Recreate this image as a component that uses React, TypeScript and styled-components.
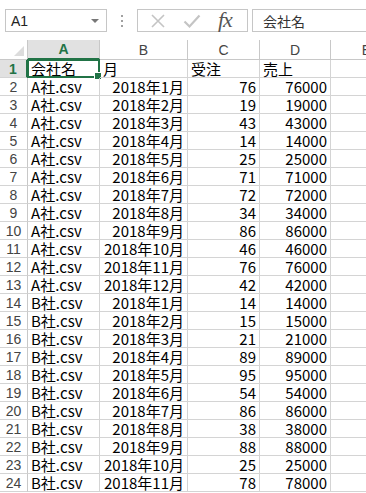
import React from 'react';
import styled, { createGlobalStyle } from 'styled-components';

const GlobalStyle = createGlobalStyle`
  html, body {
    margin: 0;
    padding: 0;
    background: #ffffff;
    overflow: hidden;
  }
  * { box-sizing: border-box; }
`;

const GREEN = '#217346';
const GRID = '#d4d4d4';
const HEAD_LINE = '#c8c8c8';

const Page = styled.div`
  width: 366px;
  height: 493px;
  overflow: hidden;
  background: #fff;
  font-family: "Noto Sans CJK JP", "Noto Sans", sans-serif;
`;

const Toolbar = styled.div`
  height: 40px;
  display: flex;
  align-items: flex-start;
  padding-top: 9px;
  padding-left: 5px;
`;

const NameBox = styled.div`
  width: 102px;
  height: 23px;
  border: 1px solid #c6c6c6;
  display: flex;
  align-items: center;
  justify-content: space-between;
  padding: 0 7px 0 5px;
  font-family: "Liberation Sans", sans-serif;
  font-size: 14px;
  color: #222;
`;

const Caret = styled.span`
  width: 0;
  height: 0;
  border-left: 4px solid transparent;
  border-right: 4px solid transparent;
  border-top: 4px solid #777;
`;

const Grip = styled.div`
  width: 30px;
  height: 23px;
  display: flex;
  flex-direction: column;
  align-items: center;
  justify-content: center;
  gap: 3px;
  span {
    width: 2px;
    height: 2px;
    background: #a0a0a0;
  }
`;

const FxBox = styled.div`
  width: 111px;
  height: 23px;
  border: 1px solid #c6c6c6;
  display: flex;
  align-items: center;
  padding-left: 12px;
  gap: 17px;
`;

const FxLabel = styled.span`
  font-family: "Liberation Serif", serif;
  font-style: italic;
  font-size: 22px;
  color: #555;
  line-height: 1;
  margin-top: -2px;
  letter-spacing: -1px;
`;

const FormulaInput = styled.div`
  flex: 1;
  height: 23px;
  margin-left: 4px;
  border: 1px solid #c6c6c6;
  border-right: none;
  display: flex;
  align-items: center;
  padding-left: 10px;
  font-family: "Noto Sans CJK JP", sans-serif;
  font-size: 14px;
  color: #333;
`;

const Sheet = styled.div`
  display: grid;
  grid-template-columns: 28px 72px 88px 72px 71px 72px;
  grid-template-rows: 20px;
  grid-auto-rows: 18px;
`;

const Corner = styled.div`
  border-right: 1px solid ${HEAD_LINE};
  border-bottom: 1px solid ${HEAD_LINE};
  position: relative;
  &::after {
    content: '';
    position: absolute;
    right: 3px;
    bottom: 3px;
    width: 0;
    height: 0;
    border-left: 10px solid transparent;
    border-bottom: 10px solid #dcdcdc;
  }
`;

const ColHead = styled.div<{ $active?: boolean }>`
  display: flex;
  align-items: center;
  justify-content: center;
  font-family: "Liberation Sans", sans-serif;
  font-size: 14px;
  background: ${p => (p.$active ? '#e1e1e1' : '#fff')};
  color: ${p => (p.$active ? GREEN : '#444')};
  font-weight: ${p => (p.$active ? 700 : 400)};
  border-right: 1px solid ${HEAD_LINE};
  border-bottom: ${p => (p.$active ? `2px solid ${GREEN}` : `1px solid ${HEAD_LINE}`)};
`;

const RowHead = styled.div<{ $active?: boolean }>`
  display: flex;
  align-items: center;
  justify-content: center;
  font-family: "Liberation Sans", sans-serif;
  font-size: 14px;
  background: ${p => (p.$active ? '#e1e1e1' : '#fff')};
  color: ${p => (p.$active ? GREEN : '#444')};
  font-weight: ${p => (p.$active ? 700 : 400)};
  border-right: ${p => (p.$active ? `2px solid ${GREEN}` : `1px solid ${HEAD_LINE}`)};
  border-bottom: 1px solid ${GRID};
`;

const Cell = styled.div<{ $num?: boolean }>`
  position: relative;
  display: flex;
  align-items: center;
  justify-content: ${p => (p.$num ? 'flex-end' : 'flex-start')};
  padding: 0 3px;
  font-size: 15px;
  line-height: 17px;
  color: #000;
  white-space: nowrap;
  border-right: 1px solid ${GRID};
  border-bottom: 1px solid ${GRID};
`;

const Selection = styled.div`
  position: absolute;
  left: -1px;
  top: -1px;
  right: -1px;
  bottom: -1px;
  border: 2px solid ${GREEN};
  pointer-events: none;
  &::after {
    content: '';
    position: absolute;
    right: -4px;
    bottom: -4px;
    width: 6px;
    height: 6px;
    background: ${GREEN};
    border: 1px solid #fff;
  }
`;

const CrossIcon = () => (
  <svg width="16" height="16" viewBox="0 0 16 16">
    <path d="M2 2 L14 14 M14 2 L2 14" stroke="#c4c4c4" strokeWidth="1.6" fill="none" />
  </svg>
);

const CheckIcon = () => (
  <svg width="18" height="16" viewBox="0 0 18 16">
    <path d="M1.5 8.5 L6.5 13.5 L16.5 2.5" stroke="#c4c4c4" strokeWidth="2.2" fill="none" />
  </svg>
);

const data: [string, number][] = [
  ['A', 76], ['A', 19], ['A', 43], ['A', 14], ['A', 25], ['A', 71],
  ['A', 72], ['A', 34], ['A', 86], ['A', 46], ['A', 76], ['A', 42],
  ['B', 14], ['B', 15], ['B', 21], ['B', 89], ['B', 95], ['B', 54],
  ['B', 86], ['B', 38], ['B', 88], ['B', 25], ['B', 78],
];

const columns = ['A', 'B', 'C', 'D', 'E'];

export default function App() {
  return (
    <Page>
      <GlobalStyle />
      <Toolbar>
        <NameBox>
          A1
          <Caret />
        </NameBox>
        <Grip>
          <span />
          <span />
          <span />
        </Grip>
        <FxBox>
          <CrossIcon />
          <CheckIcon />
          <FxLabel>fx</FxLabel>
        </FxBox>
        <FormulaInput>会社名</FormulaInput>
      </Toolbar>
      <Sheet>
        <Corner />
        {columns.map(c => (
          <ColHead key={c} $active={c === 'A'}>{c}</ColHead>
        ))}

        <RowHead $active>1</RowHead>
        <Cell>
          会社名
          <Selection />
        </Cell>
        <Cell>月</Cell>
        <Cell>受注</Cell>
        <Cell>売上</Cell>
        <Cell />

        {data.map(([co, qty], i) => {
          const month = (i % 12) + 1;
          return (
            <React.Fragment key={i}>
              <RowHead>{i + 2}</RowHead>
              <Cell>{co}社.csv</Cell>
              <Cell $num>2018年{month}月</Cell>
              <Cell $num>{qty}</Cell>
              <Cell $num>{qty * 1000}</Cell>
              <Cell />
            </React.Fragment>
          );
        })}
      </Sheet>
    </Page>
  );
}
